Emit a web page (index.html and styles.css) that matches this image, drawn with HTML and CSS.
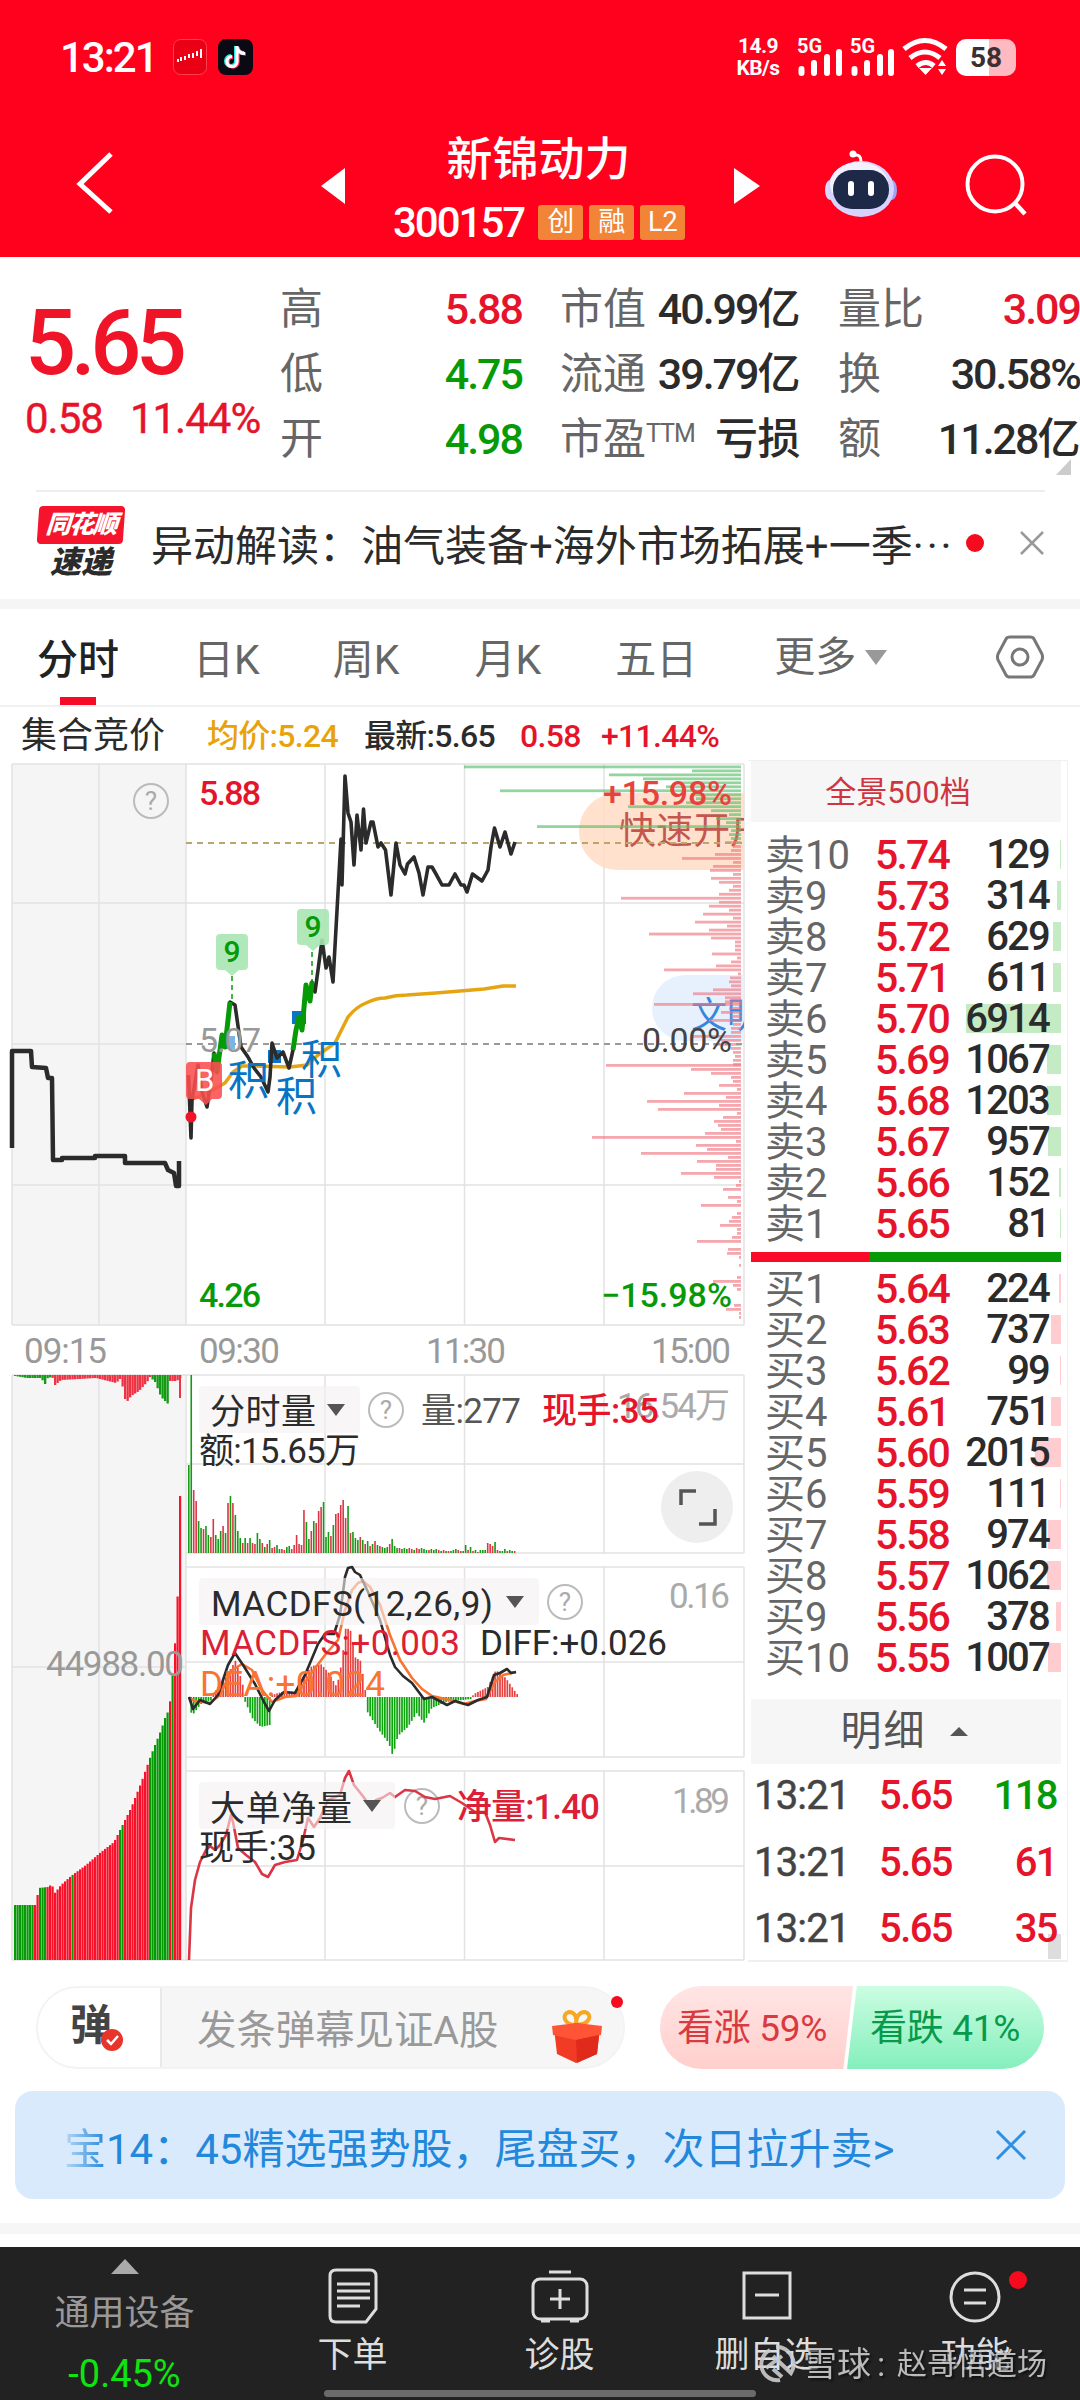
FILE: index.html
```html
<!DOCTYPE html>
<html lang="zh-CN">
<head>
    <meta charset="UTF-8">
    <meta name="viewport" content="width=1080">
    <title>新锦动力 300157</title>
    <link rel="stylesheet" href="styles.css">
</head>
<body>
<header class="header">
    <div class="status">
        <span class="clock">13:21</span>
        <svg class="app-icon" width="34" height="36" viewBox="0 0 34 36">
            <rect x=".5" y=".5" width="33" height="35" rx="7" fill="#e90014" stroke="#ff4050"/>
            <path d="M5 23v-3M8 22v-4M12 21v-4M16 19v-4M20 19v-5M24 17v-5M28 19V10" stroke="#fff" stroke-width="2"/>
        </svg>
        <svg class="app-icon" width="35" height="36" viewBox="0 0 35 36">
            <rect width="35" height="36" rx="8" fill="#0b0914"/>
            <path d="M18 7v15a5 5 0 1 1-5-5M18 8c1 4 4 6 8 6" fill="none" stroke="#28e5e5" stroke-width="4"/>
            <path d="M20 8v15a5 5 0 1 1-5-5M20 9c1 4 4 6 8 6" fill="none" stroke="#ff2d55" stroke-width="3.5"/>
            <path d="M19 7v15.500a5 5 0 1 1-5-5M19 8.500c1 4 4 6 8 6" fill="none" stroke="#fff" stroke-width="3.200"/>
        </svg>
        <span class="speed">14.9<br>KB/s</span>
        <svg width="152" height="40" viewBox="0 0 152 40" class="signal">
            <text x="0" y="16">5G</text>
            <text x="53" y="16">5G</text>
            <path d="M4.500 32v4M17 26v10M30 20v16M42 15v21M57.500 32v4M70 26v10M83 20v16M94 15v21" stroke="#fff" stroke-width="6" stroke-linecap="round"/>
            <g fill="none" stroke="#fff" stroke-width="5"><path d="M107 12q21-17 42 0M113 21q15-12 30 0M120 29q9-7 17 0"/></g>
            <path d="M122 31h13l-6.500 7zM141 29l4-6 4 6zM141 32h8l-4 6z" fill="#fff"/>
        </svg>
        <span class="battery">58</span>
    </div>
    <div class="title-bar">
        <svg class="back" width="40" height="64" viewBox="0 0 40 64"><path d="M36 3L5 33l31 28" fill="none" stroke="#fff" stroke-width="5"/></svg>
        <svg class="prev" width="24" height="36" viewBox="0 0 24 36"><path d="M24 0v36L0 18z" fill="#fff"/></svg>
        <div class="stock">
            <div class="stock-name">新锦动力</div>
            <div class="stock-code">300157<i>创</i><i>融</i><i>L2</i></div>
        </div>
        <svg class="next" width="26" height="36" viewBox="0 0 26 36"><path d="M0 0l26 18L0 36z" fill="#fff"/></svg>
        <svg class="robot" width="74" height="68" viewBox="0 0 74 68">
            <path d="M37 12q0-8-6-7" fill="none" stroke="#fff" stroke-width="3"/><circle cx="29" cy="4" r="3.500" fill="#fff"/>
            <ellipse cx="6" cy="40" rx="5" ry="10" fill="#d9d9ff"/><ellipse cx="68" cy="40" rx="5" ry="10" fill="#9fa2f5"/>
            <ellipse cx="37" cy="39" rx="33" ry="28" fill="#d6d3ff"/><ellipse cx="35" cy="34" rx="29" ry="22" fill="#f4f1ff"/>
            <rect x="9" y="20" width="56" height="39" rx="19" fill="#1d2947"/>
            <path d="M27 34v9M47 34v9" stroke="#fff" stroke-width="6" stroke-linecap="round"/>
        </svg>
        <svg class="search" width="62" height="64" viewBox="0 0 62 64"><circle cx="30" cy="31" r="27.500" fill="none" stroke="#fff" stroke-width="4"/><path d="M49 49l11 12" stroke="#fff" stroke-width="4.500"/></svg>
    </div>
</header>

<section class="quote">
    <div class="price">
        <div class="last">5.65</div>
        <div class="change"><span>0.58</span><span>11.44%</span></div>
    </div>
    <dl class="col col-a">
        <dt>高</dt><dd class="red">5.88</dd>
        <dt>低</dt><dd class="green">4.75</dd>
        <dt>开</dt><dd class="green">4.98</dd>
    </dl>
    <dl class="col col-b">
        <dt>市值</dt><dd>40.99<b>亿</b></dd>
        <dt>流通</dt><dd>39.79<b>亿</b></dd>
        <dt>市盈<sup>TTM</sup></dt><dd><b>亏损</b></dd>
    </dl>
    <dl class="col col-c">
        <dt>量比</dt><dd class="red">3.09</dd>
        <dt>换</dt><dd>30.58%</dd>
        <dt>额</dt><dd>11.28<b>亿</b></dd>
    </dl>
    <span class="corner"></span>
</section>

<section class="news">
    <div class="news-logo"><span class="logo-top">同花顺</span><span class="logo-bottom">速递</span></div>
    <p>异动解读：油气装备+海外市场拓展+一季<span>···</span></p>
    <span class="dot"></span>
    <svg width="24" height="24" viewBox="0 0 24 24"><path d="M1 1l22 22M23 1L1 23" stroke="#999" stroke-width="2.500"/></svg>
</section>

<nav class="tabs">
    <a class="active">分时</a><a>日K</a><a>周K</a><a>月K</a><a>五日</a><a class="more">更多</a>
    <svg width="48" height="46" viewBox="0 0 48 46" fill="none" stroke="#777" stroke-width="3"><path d="M14 3h20q3 0 4 2l8 15q1 3 0 6l-8 15q-1 2-4 2H14q-3 0-4-2L2 26q-1-3 0-6l8-15q1-2 4-2z"/><circle cx="24" cy="23" r="8"/></svg>
</nav>
<div class="info">
    <span class="auction">集合竞价</span><span class="avg">均价:5.24</span><span class="newest">最新:5.65</span><span class="red diff">0.58</span><span class="red">+11.44%</span>
</div>

<main class="main">
    <svg class="charts" width="748" height="1205" viewBox="0 760 748 1205">
        <defs><clipPath id="plot"><rect x="12" y="762" width="732" height="1200"/></clipPath></defs>
        <rect x="12" y="764" width="174" height="561" fill="#f5f5f5"/>
        <rect x="12" y="1375" width="174" height="585" fill="#f5f5f5"/>
        <path class="grid" d="M12 764H744M12 903H744M12 1044H186M12 1185H744M12 1325H744M12 764V1325M99 764V1325M186 764V1325M325 764V1325M464.500 764V1325M604 764V1325M744 764V1325M12 1375H744M186 1464H744M186 1553H744M186 1567H744M186 1662H744M186 1757H744M186 1771H744M186 1866H744M12 1960H744M12 1667H186M12 1375V1960M99 1375V1960M186 1375V1960M325 1375V1553M464.500 1375V1553M604 1375V1553M744 1375V1553M325 1567V1757M464.500 1567V1757M604 1567V1757M744 1567V1757M325 1771V1960M464.500 1771V1960M604 1771V1960M744 1771V1960"/>
        <g clip-path="url(#plot)">
            <rect x="579" y="793" width="220" height="77" rx="38" fill="#ffdcc4" opacity=".85"/>
            <text x="619" y="844" font-size="37" fill="#c4574d">快速开户</text>
            <rect x="652" y="975" width="150" height="66" rx="33" fill="#e4f0fd" opacity=".9"/>
            <text x="691" y="1028" font-size="36" fill="#3985dc">文明</text>
            <g id="depth"></g>
        </g>
        <path d="M186 843H744" stroke="#b9a669" stroke-width="2" stroke-dasharray="6 5"/>
        <path d="M186 1044H744" stroke="#999" stroke-width="2" stroke-dasharray="6 5"/>

        <rect x="292" y="1011" width="14" height="13" fill="#0a75c8"/>
        <rect x="268" y="1050" width="13" height="13" fill="#0a75c8"/>
        <rect x="223" y="1036" width="12" height="13" fill="#7fb4e0"/>
        <path class="average" d="M193 1099L213 1090L225 1083L233 1072L242 1066L255 1066L290 1067L307 1065L318 1055L335 1043L348 1017Q356 1007 366 1003Q376 998 385 998Q396 995 407 995L436 993L484 989L503 986H516"/>
        <path class="trend auction-line" d="M12 1148V1051H31L32 1067L46 1068L48 1078L52 1078L53 1160H62V1158H95V1156H125V1163H165L168 1170L174 1173L176 1186H179V1161"/>
        <path class="trend" d="M188.500 1075L191 1138L192 1100L198 1065L202 1092L207 1107L211 1080L214 1053L217 1072L222 1035L225 1047L230 1002L235 1005L241 1047L248 1057L254 1068L261 1077L268 1092L270 1077L272 1043L277 1058L283 1052L289 1068L293 1050L296 1030L299 1017L302 1030L306 985L310 1001L312 982L315 992L318 970L322 940L326 968L329 957L333 982L341 839L342 885L345 776L348 813L351 822L354 865L357 815L361 850L363.500 809L366 843L371 822H373L378 847L381 843L385.500 850L391 895L396 843L400 865L405 874L407.500 864L414 857L419 873L423 895L428 867H432L436 874L442 885H449L455 874L461 885H464L467 892L472.500 874L482 881L488 870L491 847L494.500 828L500 847L505 832L511 854L515 842"/>
        <path class="trend up" d="M214 1053L217 1072L222 1035L225 1047L230 1002M293 1050L296 1030L299 1017L302 1030L306 985L310 1001L312 982"/>
        <text x="199" y="1052" font-size="34" fill="#999" textLength="62">5.07</text>
        <path d="M232 976V1002M312 952V982" stroke="#079a07" stroke-width="1.500" stroke-dasharray="5 4"/>
        <path d="M220 934h24q4 0 4 4v28q0 4-4 4h-5l-7 6-7-6h-5q-4 0-4-4v-28q0-4 4-4zM301 909h24q4 0 4 4v28q0 4-4 4h-5l-7 6-7-6h-5q-4 0-4-4v-28q0-4 4-4z" fill="#a9e6b1" opacity=".9"/>
        <g font-size="30" font-weight="500" fill="#079a07"><text x="223.500" y="962">9</text><text x="304.500" y="937">9</text></g>
        <path d="M190 1062h28q4 0 4 4v29q0 4-4 4h-6l-6 6-7-6h-9q-4 0-4-4v-29q0-4 4-4z" fill="#fb4f50" opacity=".88"/>
        <text x="195" y="1091" font-size="31" fill="#fff">B</text>
        <circle cx="191" cy="1117" r="5.500" fill="#f01428"/>
        <g font-size="41" fill="#0874c4"><text x="228" y="1095">积</text><text x="276" y="1111">积</text><text x="301" y="1074">积</text></g>

        <g class="help"><circle cx="151" cy="801" r="17"/><circle cx="386" cy="1410" r="17"/><circle cx="565" cy="1602" r="17"/><circle cx="422" cy="1806" r="17"/></g>
        <g font-size="26" fill="#aaa" text-anchor="middle"><text x="151" y="810">?</text><text x="386" y="1419">?</text><text x="565" y="1611">?</text><text x="422" y="1815">?</text></g>

        <g font-size="34" font-weight="500">
            <text x="199" y="805" fill="#e6142a" textLength="62">5.88</text>
            <text x="199" y="1307" fill="#079a07" textLength="62">4.26</text>
            <text x="603" y="805" fill="#e8423c" textLength="129">+15.98%</text>
            <text x="601" y="1307" fill="#079a07" textLength="131">−15.98%</text>
            <text x="642" y="1052" fill="#444" textLength="90" font-weight="400">0.00%</text>
        </g>
        <g font-size="35" fill="#999">
            <text x="24" y="1363" textLength="83">09:15</text><text x="199" y="1363" textLength="81">09:30</text>
            <text x="426" y="1363" textLength="80">11:30</text><text x="651" y="1363" textLength="80">15:00</text>
        </g>

        <g id="auction-bars"></g><g id="volume"></g>
        <g id="macd"></g>
        <path d="M189 1698L195 1701L210 1703L220 1695L232 1670L242 1664L252 1670L262 1690L272 1702L285 1697L296 1696L310 1675L325 1655L338 1640L345 1610L352 1590L358 1583L363 1581L370 1587L380 1605L390 1635L400 1660L412 1678L422 1689L432 1696L450 1700L464 1704L475 1701L486 1699L495 1682L503 1675L516 1672" class="line" stroke="#fa7431"/>
        <path d="M189 1697L193 1709L200 1700L210 1704L218 1695L228 1665L235 1653L243 1665L255 1684L264 1702L269 1711L275 1700L284 1692L295 1693L305 1675L318 1644L325 1634L334 1634L340 1615L345 1577L348 1568L352 1567L355 1572L360 1575L368 1592L380 1620L390 1655L395 1667L403 1676L412 1683L424 1699L432 1697L447 1705L455 1701L468 1705L478 1700L487 1697L494 1675L500 1673L507 1669L511 1673L516 1672" class="line" stroke="#2b2b2b"/>
        <path d="M189 1960L191 1908L195 1880L200 1862L206 1850L210 1846L215 1850L220 1845L226 1835L231 1815L233 1822L238 1848L246 1855L255 1862L262 1874L268 1877L275 1865L285 1862L297 1860L303 1840L308 1818L314 1827L320 1818L328 1800L340 1795L345 1778L349 1771L354 1785L362 1795L370 1806L376 1800L382 1798L390 1793L395 1797L405 1790L415 1791L425 1797L435 1799L450 1796L462 1803L475 1812L485 1812L490 1825L495 1842L499 1838L515 1840" class="line" stroke="#dc3545"/>
        <rect class="pick" x="199" y="1386" width="161" height="47" rx="4"/>
        <rect class="pick" x="199" y="1578" width="340" height="47" rx="4"/>
        <rect class="pick" x="199" y="1782" width="196" height="47" rx="4"/>
        <path d="M327 1404h18l-9 12zM506 1596h18l-9 12zM363 1800h18l-9 12z" fill="#555"/>

        <g font-size="35" fill="#2b2b2b">
            <text x="46" y="1676" fill="#999" textLength="138">44988.00</text>
            <text x="210" y="1424" textLength="106">分时量</text>
            <text x="421" y="1423" fill="#555" textLength="100">量:277</text>
            <text x="617" y="1418" fill="#aaa" textLength="113">16.54万</text>
            <text x="542" y="1423" fill="#e6142a" font-weight="500" textLength="117">现手:35</text>
            <text x="199" y="1463" textLength="161">额:15.65万</text>
            <text x="211" y="1616" textLength="282">MACDFS(12,26,9)</text>
            <text x="669" y="1608" fill="#aaa" textLength="61">0.16</text>
            <text x="200" y="1655" fill="#dc1e37" textLength="260">MACDFS:+0.003</text>
            <text x="480" y="1655" textLength="187">DIFF:+0.026</text>
            <text x="200" y="1696" fill="#fa7431" textLength="185">DEA:+0.024</text>
            <text x="210" y="1821" textLength="142">大单净量</text>
            <text x="457" y="1819" fill="#dc1e37" font-weight="500" textLength="143">净量:1.40</text>
            <text x="672" y="1813" fill="#aaa" textLength="58">1.89</text>
            <text x="199" y="1860" textLength="117">现手:35</text>
        </g>
        <circle cx="697" cy="1507" r="36" fill="#eee"/>
        <path d="M681 1505V1491H696M715 1509V1524H699" fill="none" stroke="#555" stroke-width="3.500"/>
    </svg>

    <aside class="book">
        <div class="book-head">全景500档</div>
        <div class="rows" id="asks"></div>
        <div class="ratio"></div>
        <div class="rows" id="bids"></div>
        <div class="detail-head">明细<span></span></div>
        <div class="trades">
            <div><span>13:21</span><span class="red">5.65</span><span class="green">118</span></div>
            <div><span>13:21</span><span class="red">5.65</span><span class="red">61</span></div>
            <div><span>13:21</span><span class="red">5.65</span><span class="red">35</span></div>
        </div>
    </aside>
</main>

<section class="comment">
    <div class="comment-box">
        <div class="dan">弹<svg width="24" height="24" viewBox="0 0 24 24"><circle cx="12" cy="12" r="11" fill="#e8352b"/><path d="M7 12l4 4 7-8" fill="none" stroke="#fff" stroke-width="2.500"/></svg></div>
        <div class="placeholder">发条弹幕见证A股</div>
        <svg class="gift" width="52" height="54" viewBox="0 0 52 54">
            <path d="M25 15C13 15 10 4 18 2c7 0 8 7 7 13C25 9 27 2 34 2c8 2 5 13-9 13z" fill="none" stroke="#f7a823" stroke-width="4"/>
            <path d="M3 18l23-5 23 5-3 26-21 9L6 44z" fill="#f23b25"/><path d="M1 16l25-3 25 3-1 9-25 5-23-5z" fill="#ff5435"/><path d="M25 30l1 23 20-9 2-19z" fill="#e02a1b"/>
        </svg>
        <span class="dot"></span>
    </div>
    <div class="vote"><span class="vote-up">看涨 59%</span><span class="vote-down">看跌 41%</span></div>
</section>
<section class="banner">
    <p><span class="fade">宝</span>14：45精选强势股，尾盘买，次日拉升卖&gt;</p>
    <svg width="32" height="30" viewBox="0 0 32 30"><path d="M2 1l28 28M30 1L2 29" stroke="#2f8fe0" stroke-width="3"/></svg>
</section>
<div class="gap"></div>

<footer class="footer">
    <div class="device"><i></i><span>通用设备</span><b>-0.45%</b></div>
    <div class="item"><svg width="58" height="58" viewBox="0 0 58 58"><path d="M12 3h34q6 0 6 6v33L42 55H12q-6 0-6-6V9q0-6 6-6z"/><path d="M13 17h33M13 24h33M13 31h33M13 39h23"/></svg>下单</div>
    <div class="item"><svg width="58" height="58" viewBox="0 0 58 58"><rect x="2" y="12" width="54" height="40" rx="7"/><path d="M18 5h22M29 22v20M19 32h20M10 54h9M39 54h9"/></svg>诊股</div>
    <div class="item"><svg width="58" height="58" viewBox="0 0 58 58"><path d="M6 6h46v45H6zM17 28h24"/></svg>删自选</div>
    <div class="item"><svg width="58" height="58" viewBox="0 0 58 58"><circle cx="28" cy="30" r="24"/><path d="M17 23h22M17 36h22"/></svg>功能<span class="dot"></span></div>
    <div class="home"></div>
    <div class="watermark"><svg width="40" height="40" viewBox="0 0 40 40" fill="none" stroke="#ccc" stroke-width="4"><path d="M13 6a16 16 0 0 0 10 30M19 3a17 17 0 0 1 15 26L16 12M9 24l16-12M16 25l9 8"/></svg><span>雪球</span><em>:</em><span class="author">赵哥悟道场</span></div>
</footer>
<script src="script.js"></script>
</body>
</html>
```
FILE: styles.css
```css
* {
    box-sizing: border-box;
}

body {
    width: 1080px;
    margin: 0;
    background: #fff;
    color: #2b2b2b;
    font-family: Roboto, "Noto Sans CJK SC", sans-serif;
    overflow-x: hidden;
}

p, dl, dd {
    margin: 0;
}

svg {
    display: block;
    flex: none;
}

.red { color: #e6142a; }
.green { color: #079a07; }

.dot {
    width: 18px;
    height: 18px;
    border-radius: 50%;
    background: #f50a1e;
}

/* header */
.header {
    height: 257px;
    background: #ff001d;
    color: #fff;
}

.status {
    display: flex;
    align-items: center;
    height: 114px;
    padding: 0 59px 0 60px;
}

.clock {
    width: 113px;
    font-size: 42px;
    font-weight: 500;
    letter-spacing: -2px;
}

.app-icon {
    margin-right: 11px;
}

.speed {
    margin-left: 464px;
    margin-right: 9px;
    width: 60px;
    flex: none;
    font-size: 21px;
    line-height: 22px;
    font-weight: 700;
    text-align: center;
    letter-spacing: -.6px;
}

.signal {
    overflow: visible;
}

.signal text {
    font-size: 20px;
    font-weight: 700;
    fill: #fff;
}

.battery {
    margin-left: 7px;
    width: 60px;
    height: 37px;
    border-radius: 10px;
    background: linear-gradient(90deg, #fff 55%, #ffb9c0 55%);
    color: #3a3034;
    font-size: 28px;
    font-weight: 700;
    line-height: 38px;
    text-align: center;
    flex: none;
}

.title-bar {
    display: flex;
    height: 143px;
}

.back { margin: 37px 0 0 75px; }
.prev { margin: 54px 0 0 206px; }
.next { margin: 54px 0 0 8px; }
.robot { margin: 36px 0 0 64px; }
.search { margin: 39px 0 0 67px; }

.stock {
    width: 381px;
    flex: none;
    text-align: center;
}

.stock-name {
    margin-top: 12px;
    padding-left: 6px;
    height: 64px;
    font-size: 46px;
    line-height: 66px;
    font-weight: 500;
}

.stock-code {
    display: flex;
    align-items: center;
    gap: 6px;
    height: 64px;
    padding-left: 48px;
    font-size: 42px;
    font-weight: 500;
    letter-spacing: -2px;
}

.stock-code i {
    width: 45px;
    height: 35px;
    border-radius: 3px;
    background: #f18437;
    font-size: 27px;
    line-height: 35px;
    font-style: normal;
    font-weight: 400;
    letter-spacing: 0;
}

.stock-code i:first-of-type {
    margin-left: 8px;
}

/* quote */
.quote {
    position: relative;
    display: flex;
    height: 233px;
    padding-top: 20px;
}

.price {
    width: 280px;
    padding: 7px 0 0 25px;
    color: #f01428;
}

.last {
    height: 114px;
    font-size: 90px;
    line-height: 119px;
    font-weight: 500;
    letter-spacing: -5.5px;
}

.change {
    display: flex;
    gap: 27px;
    font-size: 42px;
    line-height: 42px;
    letter-spacing: -1px;
    color: #e6142a;
    -webkit-text-stroke: .4px #e6142a;
}

.col {
    display: grid;
    grid-template-columns: 84px 1fr;
    grid-auto-rows: 65px;
    line-height: 65px;
    font-size: 43px;
}

.col dt {
    color: #666;
    white-space: nowrap;
}

.col dd {
    text-align: right;
    font-weight: 500;
    letter-spacing: -2px;
    font-size: 43px;
    white-space: nowrap;
}

.col b {
    font-size: 43px;
    font-weight: 500;
    letter-spacing: -.5px;
}

.col sup {
    font-size: 25px;
    line-height: 0;
    vertical-align: 12px;
    letter-spacing: -1px;
}

.col-a { width: 242px; margin-right: 38px; }
.col-b { width: 240px; margin-right: 38px; }
.col-c { width: 242px; }

.corner {
    position: absolute;
    right: 9px;
    bottom: 15px;
    border-left: 15px solid transparent;
    border-bottom: 16px solid #ccc;
}

/* news */
.news {
    display: flex;
    align-items: center;
    height: 119px;
    padding: 0 0 4px 38px;
    border-bottom: 10px solid #f5f5f5;
    background: linear-gradient(#eee, #eee) 36px 0 / 1009px 2px no-repeat;
}

.news-logo {
    width: 86px;
    height: 74px;
    margin-right: 27px;
    font-weight: 900;
    font-style: italic;
    text-align: center;
}

.logo-top {
    display: block;
    height: 38px;
    border-radius: 4px;
    background: #f5142b;
    color: #fff;
    font-size: 25px;
    line-height: 38px;
    letter-spacing: -1.5px;
    transform: skewX(-4deg);
}

.logo-bottom {
    display: block;
    font-size: 31px;
    line-height: 38px;
}

.news p {
    width: 815px;
    font-size: 42px;
    white-space: nowrap;
}

.news p span {
    letter-spacing: 3px;
}

.news > .dot {
    margin-right: 36px;
}

/* tabs */
.tabs {
    display: flex;
    align-items: center;
    height: 98px;
    padding-left: 37px;
    border-bottom: 2px solid #f1f1f1;
    font-size: 41px;
    line-height: 102px;
    color: #666;
}

.tabs a {
    height: 96px;
    margin-right: 76px;
}

.tabs .active {
    color: #222;
    font-weight: 500;
    background: linear-gradient(#f50a28, #f50a28) 50% 100% / 36px 8px no-repeat;
}

.tabs a:nth-child(1) { margin-right: 74px; }
.tabs a:nth-child(2) { margin-right: 73px; }
.tabs a:nth-child(3) { margin-right: 75px; }
.tabs a:nth-child(4) { margin-right: 74px; }
.tabs a:nth-child(5) { margin-right: 77px; }

.tabs .more {
    display: flex;
    align-items: center;
    gap: 9px;
    margin-right: 109px;
}

.more::after {
    content: "";
    border: 11px solid transparent;
    border-top: 15px solid #999;
    border-bottom: 0;
}

.info {
    display: flex;
    align-items: center;
    height: 53px;
    padding: 6px 0 0 21px;
    font-size: 32px;
    line-height: 47px;
    letter-spacing: -.7px;
    font-weight: 500;
    white-space: nowrap;
}

.auction { width: 186px; font-size: 36px; letter-spacing: 0; font-weight: 400; }
.avg { width: 157px; color: #e8a30c; }
.newest { width: 156px; }
.diff { width: 81px; }

/* charts and order book */
.main {
    display: flex;
    height: 1205px;
}

.charts {
    font-family: Roboto, "Noto Sans CJK SC", sans-serif;
}

.grid {
    fill: none;
    stroke: #e2e2e2;
    stroke-width: 1.5;
}

.trend {
    fill: none;
    stroke: #2b2b2b;
    stroke-width: 3.6;
    stroke-linejoin: round;
}

.trend.up {
    stroke: #079a07;
    stroke-width: 5;
}

.auction-line {
    stroke-width: 4.5;
}

.average {
    fill: none;
    stroke: #e5a512;
    stroke-width: 3.5;
}

.line {
    fill: none;
    stroke-width: 2.6;
    stroke-linejoin: round;
}

.pick {
    fill: #f3f0f2;
    opacity: .6;
}

.help {
    fill: none;
    stroke: #bbb;
    stroke-width: 2;
}

.book {
    width: 320px;
    padding-right: 6px;
    padding-left: 3px;
    border-top: 1px solid #f0f0f0;
    border-bottom: 2px solid #f0f0f0;
    border-right: 1px solid #f0f0f0;
    margin-bottom: 3px;
}

.book-head {
    height: 61px;
    margin-bottom: 12px;
    background: #f6f6f6;
    color: #cf3540;
    font-size: 31px;
    line-height: 64px;
    text-align: center;
    padding-right: 16px;
}

.row {
    display: grid;
    grid-template-columns: 110px 82px 106px 12px;
    height: 41px;
    padding-left: 14px;
    line-height: 42px;
    font-size: 41px;
    white-space: nowrap;
    background-repeat: no-repeat;
    background-position: 100% 50%;
}

.row .level {
    font-size: 40px;
    line-height: 43px;
    color: #666;
}

.row .at {
    color: #e6142a;
    font-weight: 500;
    letter-spacing: -1.8px;
}

.row .lots {
    width: 92px;
    text-align: right;
    font-weight: 500;
    font-size: 40px;
    letter-spacing: -1.8px;
    color: #2b2b2b;
}

.sell { background-image: linear-gradient(#c5ebc5, #c5ebc5); }
.buy { background-image: linear-gradient(#ffcccf, #ffcccf); }

.ratio {
    height: 10px;
    margin: 8px 0 6px;
    background: linear-gradient(90deg, #fa0a28 38%, #079a07 38%);
}

.detail-head {
    display: flex;
    align-items: center;
    justify-content: center;
    gap: 23px;
    height: 65px;
    margin-top: 21px;
    padding-right: 4px;
    background: #f6f6f6;
    color: #555;
    font-size: 41px;
    line-height: 69px;
    letter-spacing: 2px;
}

.detail-head span {
    border: 9px solid transparent;
    border-bottom: 9px solid #555;
    border-top: 0;
}

.trades div {
    display: grid;
    grid-template-columns: 125px 90px 88px;
    height: 66.7px;
    padding-left: 3px;
    line-height: 63px;
    font-size: 40px;
    letter-spacing: -1.6px;
    font-weight: 500;
}

.trades div span:first-child {
    font-weight: 400;
    letter-spacing: -.8px;
    color: #444;
    -webkit-text-stroke: .5px #444;
}

.trades div span:last-child {
    text-align: right;
}

.trades div:last-child {
    background: linear-gradient(#ddd, #ddd) 100% 37px / 13px 25px no-repeat;
}

/* comment box and vote */
.comment {
    display: flex;
    height: 126px;
    padding: 21px 36px 0;
}

.comment-box {
    position: relative;
    display: flex;
    width: 589px;
    height: 83px;
    border: 2px solid #f3f3f3;
    border-radius: 42px;
    background: linear-gradient(90deg, #fff 122px, #e9e9e9 122px, #e9e9e9 124px, #f6f6f6 124px);
}

.comment-box > .dot {
    position: absolute;
    right: 0;
    top: 8px;
    width: 12px;
    height: 12px;
}

.dan {
    position: relative;
    width: 159px;
    padding-left: 32px;
    font-size: 42px;
    line-height: 75px;
    font-weight: 700;
    color: #444;
}

.dan svg {
    position: absolute;
    left: 62px;
    top: 40px;
}

.placeholder {
    width: 354px;
    font-size: 39.4px;
    line-height: 85px;
    color: #999;
}

.gift {
    margin-top: 22px;
}

.vote {
    display: flex;
    width: 384px;
    height: 83px;
    margin-left: 35px;
    border-radius: 42px;
    overflow: hidden;
    font-size: 37px;
    line-height: 85px;
    white-space: nowrap;
    letter-spacing: -.3px;
}

.vote-up {
    width: 195px;
    padding-left: 17px;
    background: linear-gradient(#ffe5e5, #ffcfcc);
    color: #d93a3f;
    clip-path: polygon(0 0, 100% 0, 95% 100%, 0 100%);
}

.vote-down {
    width: 199px;
    margin-left: -6px;
    padding-left: 23px;
    background: linear-gradient(#ccfde2, #84efbc);
    color: #079a4c;
    clip-path: polygon(5% 0, 100% 0, 100% 100%, 0 100%);
}

.banner {
    display: flex;
    align-items: center;
    justify-content: space-between;
    height: 108px;
    margin: 0 15px;
    padding: 0 38px 0 49px;
    border-radius: 18px;
    background: #daeafd;
    color: #2288dc;
    font-size: 42px;
    white-space: nowrap;
}

.fade {
    background: linear-gradient(90deg, #b9d8f5, #2288dc);
    -webkit-background-clip: text;
    background-clip: text;
    color: transparent;
}

.gap {
    height: 48px;
    background: linear-gradient(#f6f6f6, #f6f6f6) 0 24px / 100% 11px no-repeat;
}

/* bottom bar */
.footer {
    position: relative;
    display: grid;
    grid-template-columns: 249px 207px 207px 208px 209px;
    height: 153px;
    background: #222;
    color: #ddd;
    font-size: 35px;
}

.device {
    display: flex;
    flex-direction: column;
    align-items: center;
    color: #999;
    line-height: 60px;
}

.device i {
    margin-top: 12px;
    margin-bottom: 10px;
    border: 14px solid transparent;
    border-bottom: 15px solid #aaa;
    border-top: 0;
}

.device b {
    color: #10e410;
    font-size: 38px;
    letter-spacing: 0;
    font-weight: 400;
}

.item {
    position: relative;
    display: flex;
    flex-direction: column;
    align-items: center;
    padding-top: 20px;
    line-height: 62px;
}

.item svg {
    fill: none;
    stroke: #ddd;
    stroke-width: 3;
}

.item .dot {
    position: absolute;
    left: 138px;
    top: 24px;
}

.home {
    position: absolute;
    left: 324px;
    bottom: 3px;
    width: 432px;
    height: 7px;
    border-radius: 4px;
    background: #6b6b6b;
}

.watermark {
    position: absolute;
    left: 757px;
    top: 97px;
    display: flex;
    align-items: center;
    font-size: 34px;
    line-height: 40px;
    color: #ccc;
    opacity: .9;
    text-shadow: 2px 2px 2px #111;
}

.watermark span {
    margin-left: 6px;
}

.watermark em {
    width: 20px;
    text-align: center;
    font-style: normal;
}

.watermark .author {
    font-size: 30px;
}
```
FILE: script.js
```js
const RED = '#dc3545';
const GREEN = '#159a15';

function draw(id, rects) {
    document.getElementById(id).innerHTML = rects.map(r =>
        `<rect x="${r[0]}" y="${r[1]}" width="${r[2]}" height="${r[3]}" fill="${r[4]}"/>`
    ).join('');
}

// value at x on a polyline given as [x, y] pairs
function at(points, x) {
    for (let i = 1; i < points.length; i++) {
        const [x0, y0] = points[i - 1];
        const [x1, y1] = points[i];
        if (x <= x1) return y0 + (y1 - y0) * (x - x0) / (x1 - x0);
    }
    return points[points.length - 1][1];
}

// price distribution on the right edge, one bar per 4px
const depth = [277,49,132,98,60,75,241,50,45,55,113,30,12,25,15,204,10,12,10,16,8,10,26,59,8,28,31,8,30,22,8,12,22,120,22,32,12,38,8,46,14,32,92,30,6,6,6,29,4,10,25,77,3,11,12,10,28,48,16,16,87,12,20,10,32,8,10,10,50,20,28,10,8,6,8,8,135,50,30,10,8,22,4,57,15,94,22,83,4,18,27,23,20,36,149,5,45,34,100,13,44,25,25,60,27,2,5,18,0,13,4,40,0,4,9,12,21,4,4,9,44,0,13,14,2,0,2,0,0,4,28,8,4,0,0,0,7,15,2,2];
draw('depth', depth.map((w, i) => {
    const y = i < 60 ? 765.5 + i * 3.98 : 1003 + (i - 60) * 4;
    return [741 - w, i < 76 ? y : y - 3, w, 2.8, i < 19 ? 'rgba(90,190,105,.65)' : 'rgba(240,120,130,.65)'];
}));

// minute volume
const volume = [88,178,63,52,32,25,24,27,18,16,34,18,14,22,27,20,50,57,50,38,22,15,10,15,10,15,10,9,20,14,10,6,9,13,5,6,8,4,4,3,6,7,4,8,18,9,8,43,31,14,22,32,30,42,46,51,16,21,17,28,39,40,48,53,35,47,20,21,15,13,16,13,9,12,7,9,12,8,7,6,5,6,9,14,7,5,5,4,5,4,5,4,3,5,4,5,4,3,3,4,3,4,3,2,3,2,2,2,3,4,3,2,2,8,3,6,2,3,1,3,3,3,10,9,7,11,3,2,2,4,2,3,2,2];
const reds = [2,3,9,10,16,24,27,32,35,39,42,43,44,45,47,52,53,54,58,60,61,62,63,64,72,76,78,82,86,91,93,98,104,111,116,122,123,124,130,133];
draw('volume', volume.map((h, i) => {
    return [188 + i * 2.45, 1553 - h, 1.6, h, reds.includes(i) || i % 4 === 2 ? RED : GREEN];
}));

// call auction: unmatched volume on top, matched volume below
const matched = [[14,55],[34,55],[36,58],[37,72],[47,73],[51,76],[53,66],[60,75],[70,84],[85,95],[100,108],[113,118],[120,132],[130,152],[140,177],[150,205],[160,230],[165,245],[168,250],[171,276],[173,310],[176,330],[178,464],[181,464]];
const unmatched = [[14,1],[26,3],[40,3],[44,9],[47,2],[52,3],[54,10],[60,5],[78,4],[95,3],[115,8],[120,3],[123,20],[125,28],[130,21],[138,16],[146,7],[149,2],[154,7],[160,22],[167,29],[169,6],[176,6],[178,3]];
const bars = [];
for (let x = 14; x < 181; x += 2.5) {
    const h = at(matched, x);
    const green = x < 32 || (x > 38 && x < 46) || (x > 71 && x < 74) || (x > 82 && x < 84) || (x > 118 && x < 123) || (x > 148 && x < 168) || (x > 170 && x < 173);
    bars.push([x, 1960 - h, 2.2, h, green ? '#069b06' : '#fb1029']);
    const top = (x > 14 && x < 50) || (x > 150 && x < 169);
    bars.push([x, 1375, 2.3, at(unmatched, x), top ? GREEN : '#ee3344']);
}
bars.push([179, 1375, 2, 23, '#ee3344']);
draw('auction-bars', bars);

const macd = [[188,-1],[191,-19],[200,-7],[211,-3],[213,4],[225,20],[235,37],[242,12],[244,-4],[252,-22],[260,-30],[269,-28],[271,2],[284,6],[296,5],[304,22],[311,31],[320,33],[328,24],[336,10],[341,35],[345,70],[350,66],[354,40],[360,36],[365,3],[366,-14],[378,-33],[388,-46],[392,-59],[397,-39],[407,-30],[416,-16],[423,-26],[431,-11],[445,-5],[470,-2],[473,3],[487,10],[495,27],[505,19],[516,3]];
const hist = [];
for (let x = 188; x < 517; x += 2.45) {
    const v = at(macd, x);
    hist.push([x, v > 0 ? 1697 - v : 1697, 1.7, Math.abs(v), v > 0 ? '#e94040' : '#0ba50b']);
}
draw('macd', hist);

// order book: level, price, lots, bar width
const asks = [[10,'5.74',129,1],[9,'5.73',314,4],[8,'5.72',629,8],[7,'5.71',611,8],[6,'5.70',6914,95],[5,'5.69',1067,14],[4,'5.68',1203,14],[3,'5.67',957,13],[2,'5.66',152,2],[1,'5.65',81,1]];
const bids = [[1,'5.64',224,2],[2,'5.63',737,10],[3,'5.62',99,1],[4,'5.61',751,10],[5,'5.60',2015,26],[6,'5.59',111,1],[7,'5.58',974,13],[8,'5.57',1062,14],[9,'5.56',378,5],[10,'5.55',1007,13]];

function fill(id, rows, label, side) {
    document.getElementById(id).innerHTML = rows.map(([n, price, lots, w]) =>
        `<div class="row ${side}" style="background-size:${w}px 29px"><span class="level">${label}${n}</span><span class="at">${price}</span><span class="lots">${lots}</span></div>`
    ).join('');
}
fill('asks', asks, '卖', 'sell');
fill('bids', bids, '买', 'buy');
```
